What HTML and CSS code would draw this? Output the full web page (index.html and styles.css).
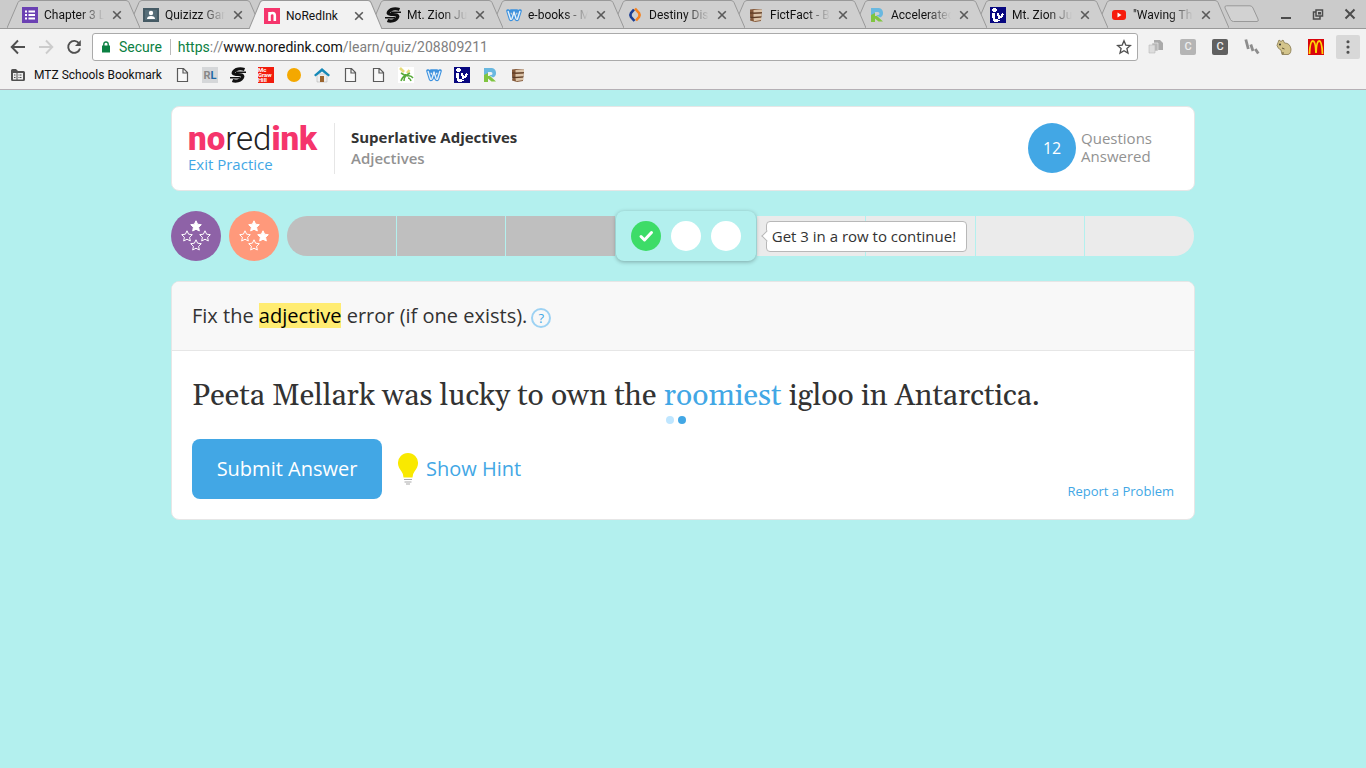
FILE: index.html
```html
<!DOCTYPE html>
<html lang="en">
<head>
<meta charset="utf-8">
<title>NoRedInk</title>
<meta name="viewport" content="width=device-width, initial-scale=1">
<link rel="stylesheet" href="styles.css">
</head>
<body>
<svg class="defs" aria-hidden="true">
  <symbol id="close" viewBox="0 0 10 10"><path d="M1.200 1.200l7.600 7.600M8.800 1.200L1.200 8.800" stroke="#5a5a5a" stroke-width="1.600"/></symbol>
  <symbol id="tab" viewBox="0 0 133 28" preserveAspectRatio="none"><path d="M0 28L11 2.500Q12 .5 14 .5H119Q121 .5 122 2.500L133 28" stroke="#999" stroke-width="1"/></symbol>
  <symbol id="page" viewBox="0 0 16 16"><path d="M3.500 1.500h6l4 4v9h-10zM9 1.500v4.500h4.500" fill="#f8f8f8" stroke="#5a5a5a" stroke-width="1.200"/></symbol>
  <symbol id="zion" viewBox="0 0 16 16"><path d="M14.500 2.500Q10 1 6.500 2.500Q3 4.500 3.200 6.200Q4 7.500 8 7.500Q13 7.500 12.800 9.500Q12 12.500 8 13.800Q5 14.500 2.500 13.500" fill="none" stroke="#111" stroke-width="3.200"/><path d="M6 5.200H16M0 10.800H10" stroke="#111" stroke-width="1.500"/></symbol>
  <symbol id="w" viewBox="0 0 16 16"><path d="M2 4L4.500 12Q5.200 13 6 11.500L8 6L10 11.500Q10.800 13 11.500 12L14 4M5 4h6" fill="none" stroke="#3c92df" stroke-width="3.600" stroke-linejoin="round" stroke-linecap="round"/><path d="M2 4L4.500 12Q5.200 13 6 11.500L8 5L10 11.500Q10.800 13 11.500 12L14 4" fill="none" stroke="#e4f0fa" stroke-width="1.400" stroke-linejoin="round"/></symbol>
  <symbol id="books" viewBox="0 0 16 16"><path d="M2 2.500L6 2l8 .5v3l-.5 1v3l-.5 1V14l-6 1-5-1.500.5-3L2 9.500V6.500z" fill="#84593a"/><path d="M5.500 3l8.500-.5v2.800L5.500 5.800zM5.500 7l8-.5v3L5.500 10zM5.500 11.200l8-.6V13L6 14.200z" fill="#dcc4a8"/><path d="M2 6h4l8-.2M2 10.300h4l7.500-.4" stroke="#3d2413" stroke-width=".7" fill="none"/></symbol>
  <symbol id="r" viewBox="0 0 16 16"><path d="M2 1h8a5 5 0 0 1 1 9.500L7 8h2a1.500 1.500 0 0 0 0-3H6v2L2 9z" fill="#69b8e0"/><path d="M2 8l4-2v3h2l6 5.500h-4.500L6 11.500V15H2z" fill="#80c541"/></symbol>
  <symbol id="reader" viewBox="0 0 16 16"><path fill="#080880" d="M0 0h16v16H0z"/><path d="M3 1h3v1h1v2H6v1H3V4H2V2h1zM2 6h3v6h3v1h2v1H8v1H4v-1H3v-3H2zM7 6h2v2h1v1h1V7h1V6h1v1h1v1h-1v2h-1v1h-2v1H8V9H7z" fill="#fff"/></symbol>
  <symbol id="star" viewBox="0 0 12 12"><path d="M6 .8l1.600 3.400 3.700.5-2.700 2.600.7 3.700L6 9.200 2.700 11l.7-3.700L.7 4.700l3.700-.5z" stroke="#fff" stroke-width="1" stroke-linejoin="round"/></symbol>
</svg>

<header class="browser">
  <div class="strip">
    <nav class="tabs" aria-label="Tabs">
      <div class="tab"><svg class="shape"><use href="#tab"/></svg>
        <svg class="ico" viewBox="0 0 16 16"><path fill="#6b41b3" d="M0 0h16v16H0z"/><path d="M3 4.500h2M3 8h2M3 11.500h2M6.500 4.500H13M6.500 8H13M6.500 11.500H13" stroke="#fff" stroke-width="1.800"/></svg>
        <span class="name">Chapter 3 L</span><button class="x" aria-label="Close tab"><svg><use href="#close"/></svg></button></div>
      <div class="tab"><svg class="shape"><use href="#tab"/></svg>
        <svg class="ico" viewBox="0 0 16 16"><path fill="#455a64" d="M0 1h16v14H0z"/><path d="M2 3h12v10H2z" fill="#566d78"/><circle cx="8" cy="6" r="2.200" fill="#fff"/><path d="M4 12q0-3 4-3t4 3z" fill="#fff"/></svg>
        <span class="name">Quizizz Gam</span><button class="x" aria-label="Close tab"><svg><use href="#close"/></svg></button></div>
      <div class="tab active"><svg class="shape"><use href="#tab"/></svg>
        <svg class="ico" viewBox="0 0 16 16"><path fill="#f5356c" d="M0 0h16v16H0z"/><path d="M5.500 13V4M5.500 7Q6 5 8.500 5Q10.800 5 10.800 7.500V13" fill="none" stroke="#fff" stroke-width="2.600"/></svg>
        <span class="name">NoRedInk</span><button class="x" aria-label="Close tab"><svg><use href="#close"/></svg></button></div>
      <div class="tab"><svg class="shape"><use href="#tab"/></svg><svg class="ico"><use href="#zion"/></svg>
        <span class="name">Mt. Zion Jun</span><button class="x" aria-label="Close tab"><svg><use href="#close"/></svg></button></div>
      <div class="tab"><svg class="shape"><use href="#tab"/></svg><svg class="ico"><use href="#w"/></svg>
        <span class="name">e-books - M</span><button class="x" aria-label="Close tab"><svg><use href="#close"/></svg></button></div>
      <div class="tab"><svg class="shape"><use href="#tab"/></svg>
        <svg class="ico" viewBox="0 0 16 16"><path d="M7 2.500L4 6Q2.700 8 4 10L7.500 14" fill="none" stroke="#1c3f94" stroke-width="2.600"/><path d="M8 1.500L12 6Q13.300 8 12 10L9 13.500" fill="none" stroke="#f58220" stroke-width="2.600"/></svg>
        <span class="name">Destiny Disc</span><button class="x" aria-label="Close tab"><svg><use href="#close"/></svg></button></div>
      <div class="tab"><svg class="shape"><use href="#tab"/></svg><svg class="ico"><use href="#books"/></svg>
        <span class="name">FictFact - Bo</span><button class="x" aria-label="Close tab"><svg><use href="#close"/></svg></button></div>
      <div class="tab"><svg class="shape"><use href="#tab"/></svg><svg class="ico"><use href="#r"/></svg>
        <span class="name">Accelerated</span><button class="x" aria-label="Close tab"><svg><use href="#close"/></svg></button></div>
      <div class="tab"><svg class="shape"><use href="#tab"/></svg><svg class="ico"><use href="#reader"/></svg>
        <span class="name">Mt. Zion Jun</span><button class="x" aria-label="Close tab"><svg><use href="#close"/></svg></button></div>
      <div class="tab"><svg class="shape"><use href="#tab"/></svg>
        <svg class="ico" viewBox="0 0 16 16"><rect x="1" y="3" width="14" height="10" rx="3" fill="#f61c0d"/><path d="M6.500 5.500v5l4-2.500z" fill="#fff"/></svg>
        <span class="name">"Waving Thr</span><button class="x" aria-label="Close tab"><svg><use href="#close"/></svg></button></div>
    </nav>
    <button class="newtab" aria-label="New tab"><svg viewBox="0 0 36 18"><path d="M2.500.8H26Q28 .8 29 3L34 14Q35 16.500 33 16.500H9.500Q7.500 16.500 6.500 14.500L1 3Q.3.8 2.500.8z" fill="#d2d2d2" stroke="#999"/></svg></button>
    <div class="winctl">
      <button aria-label="Minimize"><svg viewBox="0 0 12 12"><path d="M1 10h10" stroke="#4c4c4c" stroke-width="2"/></svg></button>
      <button aria-label="Restore"><svg viewBox="0 0 12 12"><path d="M4 2h6.500v6H4zM4 4H1.500v7H8V8.500" fill="none" stroke="#4c4c4c" stroke-width="1.500"/><path d="M6 4h3v2.500H6z" fill="#4c4c4c"/></svg></button>
      <button aria-label="Close"><svg viewBox="0 0 12 12"><path d="M1.500 1.500l9 9M10.500 1.500l-9 9" stroke="#4c4c4c" stroke-width="2"/></svg></button>
    </div>
  </div>

  <div class="toolbar">
    <div class="navs">
      <button aria-label="Back"><svg viewBox="0 0 16 16"><path d="M15 8H2M8 1.500L1.700 8 8 14.500" fill="none" stroke="#505050" stroke-width="1.900"/></svg></button>
      <button aria-label="Forward"><svg viewBox="0 0 16 16"><path d="M1 8h13M8 1.500L14.300 8 8 14.500" fill="none" stroke="#ccc" stroke-width="1.900"/></svg></button>
      <button aria-label="Reload"><svg viewBox="0 0 16 16"><path d="M13.200 4.500A6 6 0 1 0 14 9.500" fill="none" stroke="#505050" stroke-width="1.900"/><path d="M14.800 1v6H9z" fill="#505050"/></svg></button>
    </div>
    <div class="omnibox">
      <svg class="lock" viewBox="0 0 10 12"><path d="M1 4.500h8v7H1z" fill="#0b8043"/><path d="M2.800 5V3Q3 1 5 1t2.200 2v2" fill="none" stroke="#0b8043" stroke-width="1.400"/></svg>
      <span class="secure">Secure</span>
      <div class="url" role="textbox" contenteditable="true" spellcheck="false" aria-label="Address"><span class="scheme">https</span>://<span class="host">www.noredink.com</span>/learn/quiz/208809211</div>
      <button class="fav" aria-label="Bookmark this page"><svg viewBox="0 0 16 16"><path d="M8 1.800l1.800 4.300 4.600.4-3.500 3 1.100 4.600L8 11.700l-4 2.400 1.100-4.600-3.500-3 4.600-.4z" fill="none" stroke="#505050" stroke-width="1.300"/></svg></button>
    </div>
    <div class="exts">
      <button aria-label="Copies"><svg viewBox="0 0 16 16"><path d="M6 1h6l3 3v7H6z" fill="#aaa"/><path d="M4 4h6v8H4z" fill="#b8b8b8" stroke="#eee" stroke-width=".6"/><path d="M1 6h6v8H1z" fill="#ddd" stroke="#bbb" stroke-width=".6"/></svg></button>
      <button class="c">C</button>
      <button class="c dark">C</button>
      <button aria-label="Stripes"><svg viewBox="0 0 16 16" fill="none" stroke="#8d8d8d" stroke-width="2.800"><path d="M1.800.5L4.300 10M6.800 5.500L9 12M11.300 10L14.300 14.500"/></svg></button>
      <button aria-label="Hamster"><svg viewBox="0 0 16 16"><path d="M2 3.500L3 1l2 1.500L7 1l1.500 3Q14 4 15 10Q15 15 12 15.500H6L5 11Q2 10 1 6.500z" fill="#d3c48b" stroke="#84764b" stroke-width=".8"/><circle cx="4" cy="5.500" r=".9" fill="#222"/><path d="M6 9l2.500 1M7 15v-2" stroke="#655735"/></svg></button>
      <button aria-label="Arches"><svg viewBox="0 0 16 16"><path fill="#d9050c" d="M0 0h16v16H0z"/><path d="M1.500 15Q2 2 4.800 2T8 14Q8.500 2 11.200 2T14.500 15" fill="none" stroke="#fdd60a" stroke-width="1.800"/></svg></button>
      <button class="menu" aria-label="Menu"><svg viewBox="0 0 16 16"><path d="M8 2v.01M8 8v.01M8 14v.01" stroke="#505050" stroke-width="3.600" stroke-linecap="round"/></svg></button>
    </div>
  </div>

  <nav class="bookmarks" aria-label="Bookmarks">
    <a href="#" class="folder"><svg viewBox="0 0 16 16"><path d="M1 3.500Q1 2 2.500 2H6l2 2h5.500Q15 4 15 5.500v7q0 1.500-1.500 1.500h-11Q1 14 1 12.500z" fill="#505050"/><path d="M3 6h3.500v6.500H3zM7.500 6H13v6.500H7.500z" fill="#ededed"/><path d="M4 8h2M4 10.500h2M8.500 8H12M8.500 10.500H12" stroke="#505050" stroke-dasharray="1 .5"/></svg>MTZ Schools Bookmark</a>
    <a href="#" aria-label="Page"><svg><use href="#page"/></svg></a>
    <a href="#" class="rl"><span>R</span><span class="l">L</span></a>
    <a href="#" aria-label="Mt. Zion"><svg><use href="#zion"/></svg></a>
    <a href="#" class="mh"><span>Mc</span><span>Graw</span><span>Hill</span></a>
    <a href="#" aria-label="Orange"><svg viewBox="0 0 16 16"><circle cx="8" cy="8" r="7" fill="#f4a800"/></svg></a>
    <a href="#" aria-label="Home"><svg viewBox="0 0 16 16"><path d="M3 7h10v8H3z" fill="#eee" stroke="#aaa" stroke-width=".5"/><path d="M6 9h4v6H6z" fill="#9c642d"/><path d="M0 8L8 1l8 7-1.500 1.500L8 4.500 1.500 9.500z" fill="#1689b8"/></svg></a>
    <a href="#" aria-label="Page"><svg><use href="#page"/></svg></a>
    <a href="#" aria-label="Page"><svg><use href="#page"/></svg></a>
    <a href="#" aria-label="Corn"><svg viewBox="0 0 16 16"><path fill="#fff" d="M0 0h16v16H0z"/><path d="M2 1l4 4M9 6l2.500-3" stroke="#e6dc7a" stroke-width="2.600"/><path d="M3 14q1-4 5-6M6 14q0-4 3-6M7 9l5-3M9 9q4-1 6 2M10 11q2 0 3 3M3 6l5 3" fill="none" stroke="#58ab3a" stroke-width="1.500"/></svg></a>
    <a href="#" aria-label="W"><svg><use href="#w"/></svg></a>
    <a href="#" aria-label="Reader"><svg><use href="#reader"/></svg></a>
    <a href="#" aria-label="Renaissance"><svg><use href="#r"/></svg></a>
    <a href="#" aria-label="FictFact"><svg><use href="#books"/></svg></a>
  </nav>
</header>

<main class="page">
  <section class="card top">
    <div class="brand">
      <div class="logo"><b>no</b>red<b>ink</b></div>
      <a href="#">Exit Practice</a>
    </div>
    <div class="topic">
      <h1>Superlative Adjectives</h1>
      <p>Adjectives</p>
    </div>
    <div class="answered">
      <span class="count">12</span>
      <span class="label">Questions<br>Answered</span>
    </div>
  </section>

  <section class="progress" aria-label="Progress">
    <svg class="badge purple" viewBox="0 0 50 50"><g fill="none"><use href="#star" x="19" y="9" width="12" height="12" fill="#fff"/><use href="#star" x="10" y="19" width="12" height="12"/><use href="#star" x="28" y="19" width="12" height="12"/><use href="#star" x="19" y="28" width="12" height="12"/></g></svg>
    <svg class="badge coral" viewBox="0 0 50 50"><g fill="none"><use href="#star" x="19" y="9" width="12" height="12" fill="#fff"/><use href="#star" x="10" y="19" width="12" height="12"/><use href="#star" x="28" y="19" width="12" height="12" fill="#fff"/><use href="#star" x="19" y="28" width="12" height="12"/></g></svg>
    <div class="bar">
      <i class="seg done"></i><i class="seg done"></i><i class="seg done"></i>
      <div class="current">
        <svg class="dot ok" viewBox="0 0 30 30"><path d="M10 15.500l3.500 3.500 7-7.500" fill="none" stroke="#fff" stroke-width="3" stroke-linecap="round" stroke-linejoin="round"/></svg>
        <i class="dot"></i><i class="dot"></i>
        <div class="tip">Get 3 in a row to continue!</div>
      </div>
      <i class="seg"></i><i class="seg"></i><i class="seg"></i><i class="seg"></i>
    </div>
  </section>

  <section class="card quiz">
    <div class="prompt">
      <p>Fix the <mark>adjective</mark> error (if one exists).</p>
      <button class="help" aria-label="Help">?</button>
    </div>
    <div class="work">
      <p class="sentence">Peeta Mellark was lucky to own the <button class="word">roomiest<span class="pips"><i></i><i></i></span></button> igloo in Antarctica.</p>
      <div class="actions">
        <button class="submit">Submit Answer</button>
        <button class="hint"><svg viewBox="0 0 20 32"><path d="M10 0a10 10 0 0 1 10 10.500Q20 14 16.500 18.500Q14.500 21 14.500 24.500h-9Q5.500 21 3.500 18.500Q0 14 0 10.500A10 10 0 0 1 10 0z" fill="#f9e900"/><path d="M6 26.500h8M6.500 29h7M8 31h4" stroke="#aaa" stroke-width="1.200"/></svg>Show Hint</button>
        <a href="#" class="report">Report a Problem</a>
      </div>
    </div>
  </section>
</main>
</body>
</html>
```
FILE: styles.css
```css
* { box-sizing: border-box; }
body { margin: 0; min-height: 100vh; background: #b3f0ee; color: #333; font-family: "Open Sans", sans-serif; font-size: 15px; }
button { padding: 0; border: 0; background: none; color: inherit; font: inherit; cursor: pointer; }
a { color: #42a7e5; text-decoration: none; }
p, h1 { margin: 0; }
svg { display: block; }
.defs { position: absolute; width: 0; height: 0; }

.browser { background: #f2f2f2; border-bottom: 1px solid #b5b0b5; color: #111; font-family: Roboto, sans-serif; font-size: 12px; }
.strip { display: flex; height: 29px; background: #cbcbcb; border-bottom: 1px solid #999; }
.tabs { display: flex; flex: 0 1 1229px; min-width: 0; padding-left: 7px; padding-right: 12px; }
.tab { position: relative; display: flex; flex: 1; align-items: center; min-width: 0; height: 28px; margin-right: -12px; padding: 2px 18px 0 15px; }
.tab:nth-child(1) { z-index: 9; }
.tab:nth-child(2) { z-index: 8; }
.tab.active { z-index: 10; height: 29px; }
.tab:nth-child(4) { z-index: 7; }
.tab:nth-child(5) { z-index: 6; }
.tab:nth-child(6) { z-index: 5; }
.tab:nth-child(7) { z-index: 4; }
.tab:nth-child(8) { z-index: 3; }
.tab:nth-child(9) { z-index: 2; }
.shape { position: absolute; inset: 0; width: 100%; height: 100%; fill: #cfcfcf; }
.active .shape { fill: #f2f2f2; }
.ico { position: relative; flex: none; width: 16px; height: 16px; margin-right: 6px; }
.name { position: relative; flex: 1; min-width: 0; overflow: hidden; white-space: nowrap; mask-image: linear-gradient(90deg, #000 60%, transparent); }
.active .name { mask-image: none; }
.x { position: relative; margin-left: 8px; }
.x svg { width: 10px; height: 10px; }
.newtab { margin-left: -5px; }
.newtab svg { width: 36px; height: 18px; }
.winctl { display: flex; gap: 20px; margin-left: auto; padding-right: 10px; }
.winctl svg { width: 12px; height: 12px; }

.toolbar { display: flex; align-items: center; gap: 10px; padding: 4px 6px 2px 10px; }
.navs { display: flex; gap: 12px; }
.navs svg, .exts svg { width: 16px; height: 16px; }
.omnibox { display: flex; flex: 1; align-items: center; height: 28px; padding: 0 5px 0 8px; border: 1px solid #aaa; border-radius: 3px; background: #fff; font-size: 14px; }
.lock { width: 10px; height: 12px; margin-right: 8px; }
.secure { padding-right: 8px; border-right: 1px solid #bbb; color: #0b8043; }
.url { flex: 1; margin-left: 7px; color: #808080; outline: 0; }
.scheme { color: #0b8043; }
.host { color: #111; }
.fav svg { width: 16px; height: 16px; }
.exts { display: flex; align-items: center; gap: 16px; }
.c { width: 16px; height: 16px; border-radius: 2px; background: #b5b5b5; color: #eee; font-weight: 500; font-size: 11px; line-height: 16px; }
.dark { background: #606060; }
.exts .menu { display: grid; place-items: center; width: 24px; height: 24px; margin-left: -4px; border-radius: 2px; background: #d8d8d8; }
.exts .menu svg { width: 14px; height: 14px; }

.bookmarks { display: flex; align-items: center; gap: 12px; height: 26px; padding: 0 10px 2px; }
.bookmarks a { color: #111; }
.bookmarks svg { width: 16px; height: 16px; }
.folder { display: flex; align-items: center; gap: 8px; }
.rl { display: flex; justify-content: center; width: 16px; height: 16px; background: #d5d7d9; font-weight: 700; font-size: 11px; line-height: 17px; }
.rl span { color: #888; }
.rl .l { color: #2069a5; }
.mh { display: flex; flex-direction: column; width: 16px; height: 16px; overflow: hidden; background: #f21c0d; font-weight: 700; font-size: 6px; line-height: 5px; }
.mh span { color: #fff; }

.page { max-width: 1056px; margin: 0 auto; padding: 16px; }
.card { border: 1px solid #e6e6e6; border-radius: 8px; background: #fff; }
.top { display: flex; height: 85px; padding: 16px; }
.brand { width: 147px; height: 51px; border-right: 1px solid #e6e6e6; }
.logo { height: 30px; color: #222; font-family: Roboto, sans-serif; font-weight: 300; font-size: 33px; line-height: 32px; white-space: nowrap; }
.logo b { color: #f5356c; font-weight: 900; }
.brand a { display: block; line-height: 22px; }
.topic { flex: 1; padding: 4px 16px; font-weight: 700; line-height: 21px; }
.topic h1 { font-size: 15px; }
.topic p { color: #929292; font-weight: 600; }
.answered { display: flex; align-items: center; gap: 5px; height: 50px; margin-right: 26px; }
.count { display: grid; place-items: center; width: 48px; height: 50px; border-radius: 50%; background: #42a7e5; color: #fff; font-size: 16px; }
.label { padding-bottom: 2px; color: #929292; line-height: 18px; }

.progress { display: flex; align-items: center; gap: 8px; margin: 20px 1px 20px 0; }
.badge { width: 50px; height: 50px; border-radius: 50%; }
.purple { background: #8e62a7; }
.coral { background: #ff997b; }
.bar { display: flex; flex: 1; align-items: center; gap: 1px; }
.seg { flex: 1; height: 40px; background: #ebebeb; }
.done { background: #bfbfbf; }
.seg:first-child { border-radius: 20px 0 0 20px; }
.seg:last-child { border-radius: 0 20px 20px 0; }
.current { position: relative; z-index: 1; display: flex; justify-content: center; align-items: center; gap: 10px; width: 140px; height: 50px; border-radius: 8px; background: #b3f0ee; box-shadow: 0 1px 4px rgba(0, 0, 0, .3); }
.dot { width: 30px; height: 30px; border-radius: 50%; background: #fff; }
.ok { background: #3ddc68; }
.tip { position: absolute; left: 150px; top: 10px; width: 201px; height: 31px; padding-left: 5px; border: 1px solid #b8b8b8; border-radius: 4px; background: #fff; font-size: 15px; line-height: 29px; white-space: nowrap; }
.tip::before { content: ""; position: absolute; left: -4px; top: 10px; width: 7px; height: 7px; border: 1px solid #b8b8b8; border-width: 0 0 1px 1px; background: #fff; transform: rotate(45deg); }

.quiz { overflow: hidden; }
.prompt { display: flex; align-items: center; gap: 4px; height: 69px; padding: 0 20px 2px; border-bottom: 1px solid #e6e6e6; background: #f8f8f8; font-size: 20px; line-height: 25px; }
.prompt mark { display: inline-block; background: #ffec72; color: #000; }
.help { width: 20px; height: 20px; margin-top: 6px; border: 2px solid #9dd2f3; border-radius: 50%; color: #42a7e5; font-size: 13px; line-height: 16px; }
.work { padding: 20px; }
.sentence { height: 48px; font-family: Georgia, Gelasio, "Liberation Serif", serif; font-size: 30px; line-height: 50px; }
.word { position: relative; color: #42a7e5; }
.pips { position: absolute; left: 2px; bottom: -3px; display: flex; gap: 4px; }
.pips i { width: 8px; height: 8px; border-radius: 50%; background: #bfe6ff; }
.pips i:last-child { background: #42a7e5; }
.actions { display: flex; align-items: center; gap: 16px; margin-top: 20px; font-size: 20px; }
.submit { width: 190px; height: 60px; padding-bottom: 2px; border-radius: 8px; background: #42a7e5; color: #fff; }
.hint { display: flex; align-items: center; gap: 8px; color: #42a7e5; line-height: 26px; }
.hint svg { width: 20px; height: 32px; }
.report { align-self: flex-end; margin-left: auto; font-size: 13px; line-height: 16px; }
```
